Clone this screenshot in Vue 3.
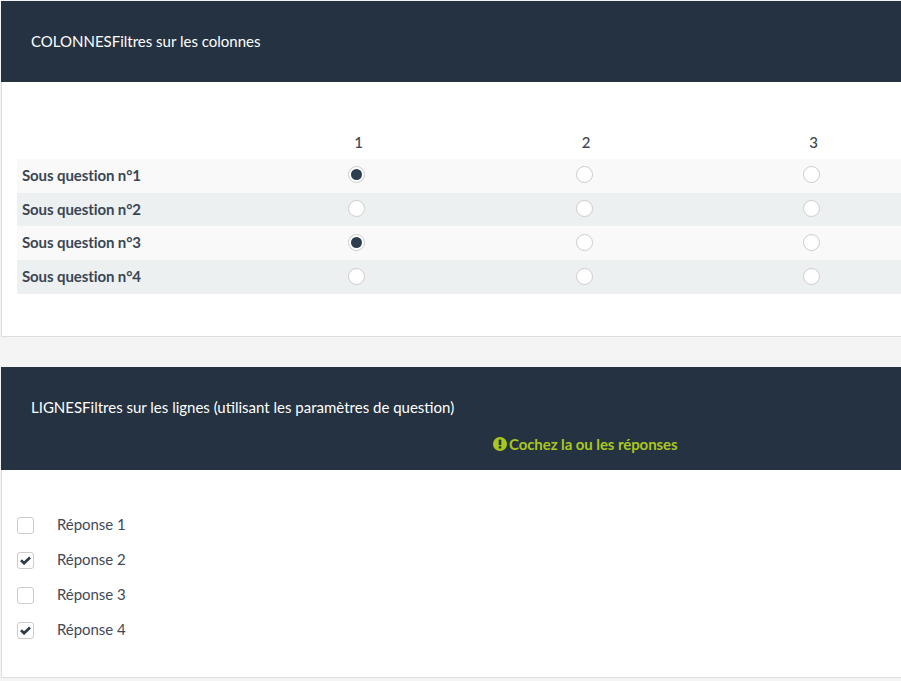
<script setup>
const cols = [1, 2, 3]
const rows = [
  { label: 'Sous question n°1', checked: 1 },
  { label: 'Sous question n°2', checked: 0 },
  { label: 'Sous question n°3', checked: 1 },
  { label: 'Sous question n°4', checked: 0 },
]
const answers = [
  { label: 'Réponse 1', checked: false },
  { label: 'Réponse 2', checked: true },
  { label: 'Réponse 3', checked: false },
  { label: 'Réponse 4', checked: true },
]
</script>

<template>
  <div class="page">
    <section class="panel first">
      <header class="head head-cols">COLONNESFiltres sur les colonnes</header>
      <div class="body body-cols">
        <div class="matrix">
          <div class="row row-head">
            <div class="label"></div>
            <div v-for="c in cols" :key="c" class="cell num">{{ c }}</div>
          </div>
          <div v-for="r in rows" :key="r.label" class="row stripe">
            <div class="label strong">{{ r.label }}</div>
            <div v-for="c in cols" :key="c" class="cell">
              <span class="radio" :class="{ on: r.checked === c }"></span>
            </div>
          </div>
        </div>
      </div>
    </section>

    <section class="panel second">
      <header class="head head-lines">
        <div>LIGNESFiltres sur les lignes (utilisant les paramètres de question)</div>
        <div class="hint">
          <svg class="alert" viewBox="0 0 14 14" width="14" height="14" aria-hidden="true">
            <circle cx="7" cy="7" r="7" fill="#a9c81e" />
            <rect x="5.7" y="2.6" width="2.6" height="5.6" rx="0.6" fill="#253241" />
            <rect x="5.7" y="9.2" width="2.6" height="2.3" rx="0.5" fill="#253241" />
          </svg>
          <span class="hint-text">Cochez la ou les réponses</span>
        </div>
      </header>
      <div class="body body-lines">
        <label v-for="a in answers" :key="a.label" class="answer">
          <span class="box">
            <svg v-if="a.checked" viewBox="0 0 12 10" width="11" height="9" aria-hidden="true">
              <path d="M1 4.8 L4.4 8 L11 1.6" fill="none" stroke="#2f3a45" stroke-width="3" />
            </svg>
          </span>
          <span class="answer-text">{{ a.label }}</span>
        </label>
      </div>
    </section>
  </div>
</template>

<style>
html, body {
  margin: 0;
  background: #f4f4f4;
  overflow: hidden;
}
</style>

<style scoped>
.page {
  width: 901px;
  height: 681px;
  overflow: hidden;
  padding: 1px 0 0 1px;
  box-sizing: border-box;
  font-family: Lato, "Open Sans", sans-serif;
  color: #2c3e50;
  font-size: 15px;
}
.panel {
  background: #fff;
  border-left: 1px solid #ddd;
  border-bottom: 1px solid #ddd;
}
.second {
  margin-top: 30px;
}
.head {
  background: #253241;
  color: #fff;
  margin-left: -1px;
  box-sizing: border-box;
  padding-left: 30px;
  font-size: 15px;
  line-height: 18px;
}
.head-cols {
  height: 81px;
  padding-top: 31px;
}
.head-lines {
  height: 103px;
  padding-top: 31px;
}
.hint {
  display: flex;
  align-items: center;
  gap: 2px;
  margin-top: 19px;
  margin-left: 462px;
  color: #a9c81e;
  font-weight: 700;
}
.hint-text {
  letter-spacing: -0.08px;
}
.alert {
  flex: none;
}
.body-cols {
  height: 254px;
  box-sizing: border-box;
  padding: 49px 0 0 15px;
}
.matrix {
  width: 913px;
}
.row {
  display: grid;
  grid-template-columns: 226px 227px 228px 227px;
  align-items: center;
}
.row-head {
  height: 27.9px;
}
.stripe {
  height: 33.75px;
}
.stripe:nth-child(even) {
  background: #f9f9f9;
}
.stripe:nth-child(odd) {
  background: #ecf0f1;
}
.label {
  padding-left: 5px;
}
.strong {
  font-weight: 700;
  color: #3a4653;
  letter-spacing: -0.1px;
  position: relative;
  top: -1px;
}
.cell {
  display: flex;
  justify-content: center;
}
.num {
  padding-left: 4px;
  box-sizing: border-box;
  font-size: 15px;
  font-weight: 500;
  color: #3a4653;
  position: relative;
  top: -3px;
}
.radio {
  width: 17px;
  height: 17px;
  margin-top: -2px;
  box-sizing: border-box;
  border: 1px solid #ccc;
  border-radius: 50%;
  background: #fff;
  display: flex;
  align-items: center;
  justify-content: center;
}
.radio.on::after {
  content: "";
  width: 11px;
  height: 11px;
  border-radius: 50%;
  background: #2c3e50;
}
.body-lines {
  height: 207px;
  box-sizing: border-box;
  padding: 38px 0 0 15px;
}
.answer {
  display: flex;
  align-items: center;
  height: 35px;
}
.box {
  width: 17px;
  height: 17px;
  box-sizing: border-box;
  border: 1px solid #ccc;
  border-radius: 3px;
  display: flex;
  align-items: center;
  justify-content: center;
}
.answer-text {
  margin-left: 23px;
  color: #3f4a56;
  letter-spacing: -0.05px;
  position: relative;
  top: -2px;
}
</style>
